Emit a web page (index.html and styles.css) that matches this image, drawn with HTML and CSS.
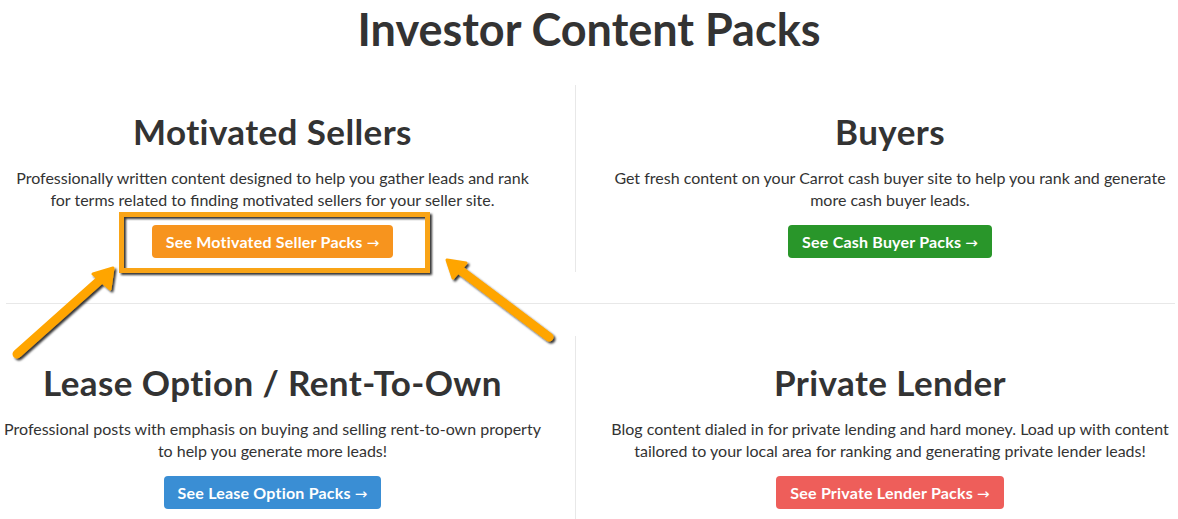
FILE: index.html
```html
<!DOCTYPE html>
<html lang="en">
<head>
<meta charset="utf-8">
<title>Investor Content Packs</title>
<link rel="stylesheet" href="styles.css">
</head>
<body>
<main class="page">
  <h1 class="title">Investor Content Packs</h1>

  <div class="row">
    <section class="pack pack-left">
      <h2 class="pack-title">Motivated Sellers</h2>
      <p class="pack-text">Professionally written content designed to help you gather leads and rank<br>for terms related to finding motivated sellers for your seller site.</p>
      <a class="btn btn-orange" href="#">See Motivated Seller Packs <span class="arrow">&#8594;</span></a>
    </section>
    <section class="pack pack-right">
      <h2 class="pack-title">Buyers</h2>
      <p class="pack-text">Get fresh content on your Carrot cash buyer site to help you rank and generate<br>more cash buyer leads.</p>
      <a class="btn btn-green" href="#">See Cash Buyer Packs <span class="arrow">&#8594;</span></a>
    </section>
  </div>

  <hr class="divider">

  <div class="row">
    <section class="pack pack-left">
      <h2 class="pack-title">Lease Option / Rent-To-Own</h2>
      <p class="pack-text">Professional posts with emphasis on buying and selling rent-to-own property<br>to help you generate more leads!</p>
      <a class="btn btn-blue" href="#">See Lease Option Packs <span class="arrow">&#8594;</span></a>
    </section>
    <section class="pack pack-right">
      <h2 class="pack-title">Private Lender</h2>
      <p class="pack-text">Blog content dialed in for private lending and hard money. Load up with content<br>tailored to your local area for ranking and generating private lender leads!</p>
      <a class="btn btn-red" href="#">See Private Lender Packs <span class="arrow">&#8594;</span></a>
    </section>
  </div>

  <svg class="annotation" width="1178" height="519" viewBox="0 0 1178 519" aria-hidden="true">
    <defs>
      <filter id="shadow" x="-20%" y="-20%" width="140%" height="140%">
        <feDropShadow dx="2" dy="2" stdDeviation="1" flood-color="#000" flood-opacity="0.8"/>
      </filter>
    </defs>
    <g filter="url(#shadow)" fill="none" stroke="#F9A413">
      <rect x="121.5" y="214.5" width="306" height="56" stroke-width="5"/>
    </g>
    <g filter="url(#shadow)" fill="#FFA500" stroke="#FFA500" stroke-linecap="round" stroke-linejoin="round">
      <line x1="17" y1="354" x2="100" y2="280" stroke-width="9"/>
      <polygon points="113,268 93,274 110,289" stroke-width="3"/>
      <line x1="549" y1="337" x2="460" y2="270" stroke-width="9"/>
      <polygon points="447,260 466,263 453,278" stroke-width="3"/>
    </g>
  </svg>
</main>
</body>
</html>
```

FILE: styles.css
```css
* {
  box-sizing: border-box;
}

html, body {
  margin: 0;
  padding: 0;
  background: #ffffff;
}

body {
  font-family: "Lato", "Open Sans", "Liberation Sans", sans-serif;
  color: #333333;
  overflow: hidden;
}

.page {
  position: relative;
  width: 1178px;
  height: 519px;
  overflow: hidden;
}

.title {
  margin: 2px 0 0;
  font-size: 45px;
  line-height: 54px;
  font-weight: 700;
  text-align: center;
  color: #333333;
}

.row {
  display: grid;
  grid-template-columns: 576px 602px;
  margin-top: 29px;
}

.divider + .row {
  margin-top: 0;
}

.pack {
  display: flex;
  flex-direction: column;
  align-items: center;
  text-align: center;
  padding-top: 26px;
  padding-bottom: 14px;
}

.pack-left {
  padding-left: 4px;
  padding-right: 34px;
  border-right: 1px solid #e8e8e8;
}

.pack-right {
  padding-left: 26px;
  padding-right: 0;
}

.pack-title {
  margin: 0;
  font-size: 35px;
  line-height: 40px;
  letter-spacing: 0.4px;
  font-weight: 700;
  color: #333333;
}

.pack-text {
  margin: 16px 0 0;
  font-size: 16px;
  line-height: 22px;
  color: #333333;
  white-space: nowrap;
}

.btn {
  display: inline-block;
  margin-top: 14px;
  height: 33px;
  padding: 0 14px;
  border-radius: 4px;
  font-size: 16px;
  line-height: 33px;
  letter-spacing: 0.2px;
  font-weight: 700;
  color: #ffffff;
  text-decoration: none;
  white-space: nowrap;
}

.arrow {
  font-family: "DejaVu Sans", sans-serif;
  font-weight: 400;
  font-size: 15px;
  letter-spacing: 0;
}

.btn-orange { background: #F7941E; }
.btn-green  { background: #29962A; }
.btn-blue   { background: #3A8ED4; }
.btn-red    { background: #EE5E5A; }

.divider {
  margin: 31px 3px 32px 6px;
  border: 0;
  border-top: 1px solid #e8e8e8;
  height: 0;
}

.annotation {
  position: absolute;
  top: 0;
  left: 0;
  pointer-events: none;
}
```
